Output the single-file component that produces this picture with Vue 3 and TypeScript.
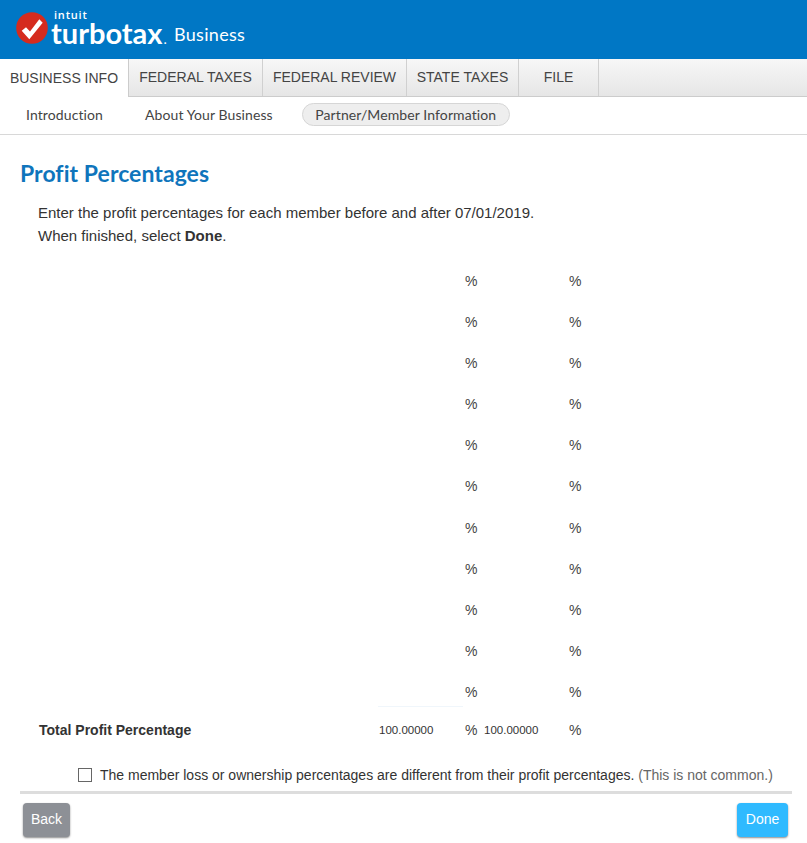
<script setup lang="ts">
const tabs: string[] = ['FEDERAL TAXES', 'FEDERAL REVIEW', 'STATE TAXES', 'FILE']
const rows: number[] = Array.from({ length: 11 }, (_, i) => i)
</script>

<template>
  <div class="page">
    <header class="brand">
      <svg class="mark" width="32" height="32" viewBox="0 0 32 32">
        <circle cx="16" cy="16" r="15.8" fill="#d52b1e" />
        <polygon points="5.7,18.7 10,15.3 14,19.5 23.3,7.3 26.7,10.7 13.3,27.3" fill="#fff" />
      </svg>
      <div class="wordmark">
        <span class="intuit">intuit</span>
        <span class="turbotax">turbotax<i class="dot">.</i></span>
      </div>
      <span class="business">Business</span>
    </header>
    <nav class="tabs">
      <div class="tab active">BUSINESS INFO</div>
      <div v-for="t in tabs" :key="t" class="tab" :class="{ file: t === 'FILE' }">{{ t }}</div>
      <div class="tab-fill"></div>
    </nav>
    <nav class="subnav">
      <span class="sub first">Introduction</span>
      <span class="sub second">About Your Business</span>
      <span class="sub pill">Partner/Member Information</span>
    </nav>
    <main class="main">
      <h1 class="title">Profit Percentages</h1>
      <p class="intro">Enter the profit percentages for each member before and after 07/01/2019.<br />When finished, select <b>Done</b>.</p>
      <div class="grid">
        <div v-for="r in rows" :key="r" class="row">
          <span class="label"></span>
          <span class="val" :class="{ lined: r === 10 }"></span><span class="pct">%</span>
          <span class="val second-val"></span><span class="pct">%</span>
        </div>
        <div class="row total">
          <span class="label">Total Profit Percentage</span>
          <span class="val">100.00000</span><span class="pct">%</span>
          <span class="val second-val">100.00000</span><span class="pct">%</span>
        </div>
      </div>
      <label class="check">
        <span class="box"></span>
        <span>The member loss or ownership percentages are different from their profit percentages. <em>(This is not common.)</em></span>
      </label>
      <div class="actions">
        <button class="btn back">Back</button>
        <button class="btn done">Done</button>
      </div>
    </main>
  </div>
</template>

<style scoped>
.page { width: 807px; height: 843px; overflow: hidden; background: #fff; font-family: "Liberation Sans", Arial, sans-serif; color: #333; }
.brand { height: 59px; background: #0077c5; display: flex; align-items: flex-start; color: #fff; box-sizing: border-box; padding: 12px 0 0 16px; }
.mark { display: block; flex: none; }
.wordmark { margin-left: 3px; display: flex; flex-direction: column; width: 123px; height: 40px; flex: none; }
.intuit { font: 600 11px/11px "Open Sans", sans-serif; margin: -3px 0 0 3px; letter-spacing: 0.8px; }
.turbotax { font: 700 29px/25px Lato, sans-serif; letter-spacing: 0; white-space: nowrap; }
.dot { font-style: normal; font-size: 14px; font-weight: 400; margin-left: 1px; }
.business { font: 400 18px/22px Lato, sans-serif; margin: 11px 0 0; letter-spacing: 0.3px; }
.tabs { height: 38px; display: flex; background: linear-gradient(#f7f7f7, #e6e6e6); box-sizing: border-box; border-bottom: 1px solid #ccc; }
.tab { height: 37px; display: flex; align-items: center; justify-content: center; font-size: 14px; color: #444; border-right: 1px solid #d0d0d0; padding: 0 0 2px; box-sizing: border-box; white-space: nowrap; }
.tab.active { width: 129px; height: 38px; background: #fff; padding: 0; border-right: 1px solid #ccc; }
.tab:nth-child(2) { width: 134px; }
.tab:nth-child(3) { width: 144px; }
.tab:nth-child(4) { width: 112px; }
.tab.file { width: 80px; }
.subnav { height: 35px; padding-bottom: 2px; display: flex; align-items: center; border-bottom: 1px solid #d8d8d8; font: 400 14px Lato, sans-serif; color: #444; letter-spacing: 0.1px; }
.first { margin-left: 26px; }
.second { margin-left: 42px; }
.pill { margin-left: 29px; height: 23px; line-height: 21px; box-sizing: border-box; padding: 0 12.5px; border: 1px solid #d6d6d6; border-radius: 12px; background: #eee; letter-spacing: 0.1px; }
.main { padding: 0 15px 0 20px; }
.title { margin: 24px 0 0; font: 700 23px/28px Lato, sans-serif; color: #0f75bc; letter-spacing: 0.05px; }
.intro { margin: 14px 0 0 18px; font-size: 15px; line-height: 23px; color: #333; }
.grid { margin-top: 13.4px; }
.row { display: flex; height: 41.1px; align-items: center; font-size: 14px; }
.label { width: 358px; padding-left: 19px; box-sizing: border-box; flex: none; font-weight: 700; }
.val { width: 85px; flex: none; height: 30px; box-sizing: border-box; font-size: 11.5px; line-height: 30px; padding-left: 1px; }
.val.lined { border-bottom: 1px solid #f0f6fb; }
.second-val { width: 83px; padding-left: 0; margin-left: 7px; }
.pct { width: 12px; flex: none; text-align: center; color: #444; margin-left: 2px; }
.total { height: 34.6px; }
.check { display: flex; align-items: center; font-size: 14px; margin: 18px 0 0 58px; height: 20px; color: #333; white-space: nowrap; }
.box { width: 14px; height: 14px; box-sizing: border-box; border: 1px solid #666; margin-right: 8px; background: #fff; flex: none; }
em { font-style: normal; color: #666; }
.actions { display: flex; justify-content: space-between; align-items: flex-start; border-top: 3px solid #ddd; margin-top: 6px; padding: 9px 4px 0 3px; }
.btn { height: 34px; border: 0; border-radius: 4px; color: #fff; font: 400 14px "Liberation Sans", Arial, sans-serif; box-shadow: 0 1px 2px rgba(0,0,0,0.45); padding: 0 0 2px; }
.back { width: 47px; background: #8d9096; }
.done { width: 51px; background: #2fbaff; }
</style>
